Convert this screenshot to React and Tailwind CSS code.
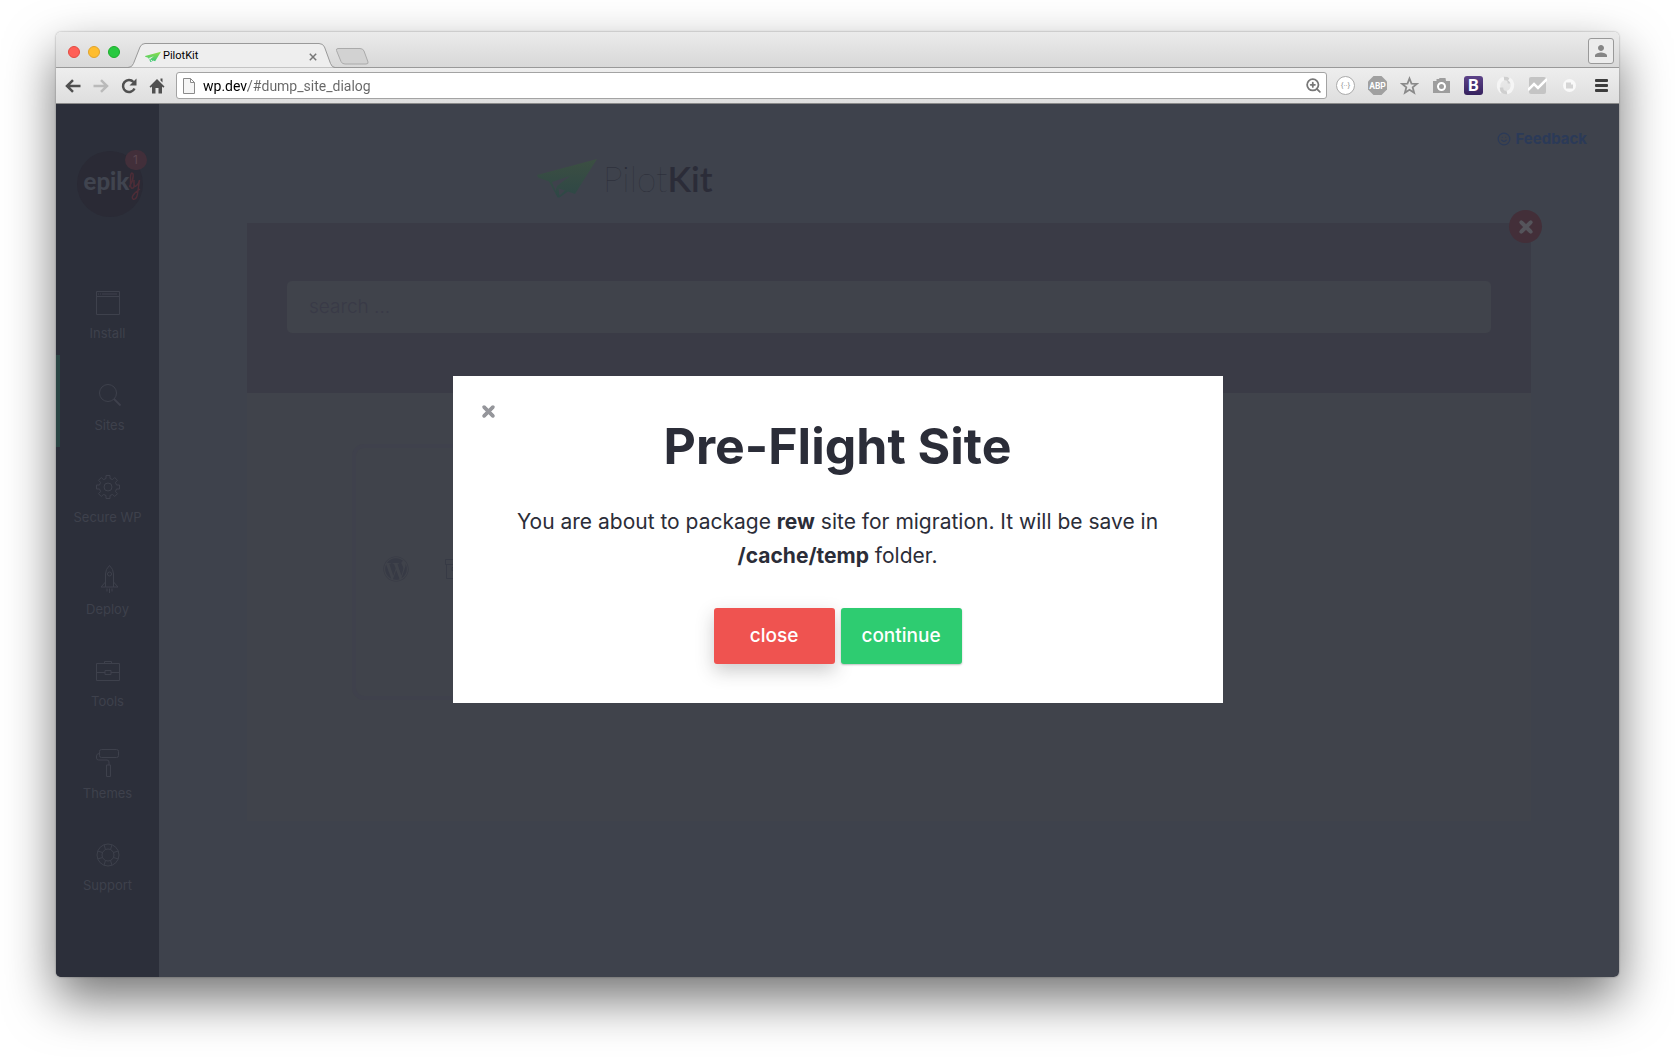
import React from "react";
import { Smile, ZoomIn } from "lucide-react";
import { FaWordpress } from "react-icons/fa";
import { MdPerson } from "react-icons/md";

function Plane({ className, id, top, bottom }) {
  return (
    <svg className={className} viewBox="0 0 60 39" aria-hidden="true">
      <defs>
        <linearGradient id={id} x1="0" y1="0" x2="0" y2="1">
          <stop offset="0" stopColor={top} />
          <stop offset="1" stopColor={bottom} />
        </linearGradient>
      </defs>
      <path
        fillRule="evenodd"
        fill={`url(#${id})`}
        d="M60 0L0 16l1 2.500 11 4L20.500 38.500h2l8.500-6 7 2.500zM33 17L20 27l-1.500 5L15 23zM21.500 29.500l6.500 2-5.500 5z"
      />
    </svg>
  );
}

const Cross = ({ size }) => (
  <svg width={size} height={size} viewBox="0 0 12 12" fill="none" stroke="currentColor" strokeWidth="3.200" strokeLinecap="round" aria-hidden="true">
    <path d="M1.800 1.800l8.400 8.400M10.200 1.800l-8.400 8.400" strokeLinecap="butt" />
    <path d="M1.900 1.900l8.200 8.200M10.100 1.900l-8.200 8.200" />
  </svg>
);

const line = { fill: "none", stroke: "currentColor", strokeWidth: 1 };

const WindowIcon = () => (
  <svg width="24" height="24" viewBox="0 0 24 24" {...line}>
    <path d="M.5 .5h23v23H.5zM.5 5.500h23M6 3h15M2 3h1M4 3h1" />
  </svg>
);
const SearchIcon = () => (
  <svg width="24" height="24" viewBox="0 0 24 24" {...line}>
    <circle cx="10" cy="10" r="8.500" />
    <path d="M16 16l6.500 6.500" strokeWidth="1.800" />
  </svg>
);
const GearIcon = () => (
  <svg width="24" height="24" viewBox="0 0 24 24" {...line}>
    <circle cx="12" cy="12" r="4" />
    <path d="M10 .5h4v3l2.600 1.100 2.100-2.100 2.800 2.800-2.100 2.100L20.500 10h3v4h-3l-1.100 2.600 2.100 2.100-2.800 2.800-2.100-2.100L14 20.500v3h-4v-3l-2.600-1.100-2.100 2.100-2.800-2.800 2.100-2.100L3.500 14h-3v-4h3l1.100-2.600-2.100-2.100 2.800-2.800 2.100 2.100L10 3.500z" />
  </svg>
);
const RocketIcon = () => (
  <svg width="24" height="28" viewBox="2 0 24 28" {...line}>
    <path d="M11.500 22V9q0-5 4-8.500 4 3.500 4 8.500v13zM11.500 17L7 22h4.500M19.500 17l4.500 5h-4.500M13 23.500v3M15.500 23.500v4.500M18 23.500v3" />
    <circle cx="15.500" cy="9" r="2" />
  </svg>
);
const CaseIcon = () => (
  <svg width="24" height="24" viewBox="0 0 24 24" {...line}>
    <path d="M.5 4.500h23v17H.5zM8.500 4.500v-2h7v2M.5 13.500H9M15 13.500h8.500M9 11.500h6v4H9z" />
  </svg>
);
const RollerIcon = () => (
  <svg width="24" height="28" viewBox="0 0 24 28" {...line}>
    <rect x="3.500" y=".5" width="19" height="8" rx="2" />
    <path d="M3.500 4.500Q.5 4.500 .5 7v2q0 2 2 2h8.500q2 0 2 2v3M10.500 16h4v11.500h-4z" />
  </svg>
);
const BuoyIcon = () => (
  <svg width="24" height="24" viewBox="0 0 24 24" {...line}>
    <circle cx="12" cy="12" r="11" />
    <circle cx="12" cy="12" r="6" />
    <path d="M9.500 6.500L8 1.700M14.500 6.500L16 1.700M9.500 17.500L8 22.300M14.500 17.500l1.500 4.800M6.500 9.500L1.700 8M6.500 14.500L1.700 16M17.500 9.500l4.800-1.500M17.500 14.500l4.800 1.500" />
  </svg>
);

const nav = [
  ["Install", WindowIcon],
  ["Sites", SearchIcon],
  ["Secure WP", GearIcon],
  ["Deploy", RocketIcon],
  ["Tools", CaseIcon],
  ["Themes", RollerIcon],
  ["Support", BuoyIcon],
];

function TabStrip() {
  return (
    <div className="flex h-9 items-end border-b border-[#999] bg-linear-to-b from-[#ebebeb] to-[#d8d8d8]">
      <div className="flex h-full w-18 items-center gap-2 pt-1 pl-3">
        <button aria-label="Close window" className="size-3 rounded-full border border-[#e24b41] bg-[#ff5f57]" />
        <button aria-label="Minimise window" className="size-3 rounded-full border border-[#e1a32c] bg-[#ffbd2e]" />
        <button aria-label="Zoom window" className="size-3 rounded-full border border-[#1dad2b] bg-[#28c940]" />
      </div>
      <div className="relative -mb-px h-[25px] w-[207px]">
        <svg className="absolute inset-0" width="207" height="25" viewBox="0 0 207 25" aria-hidden="true">
          <path d="M0 24.500q4 0 5.500-4L12 4q1.500-3.500 5-3.500h174q4 0 5.500 3.500l6 16.500q1.500 4 4.500 4" fill="#eeeeee" stroke="#999" />
        </svg>
        <div className="relative flex h-full items-center pt-0.5 pr-[18px] pl-[17px]">
          <Plane className="h-3 w-4" id="fav" top="#8fdc4a" bottom="#35c877" />
          <span className="flex-1 pl-0.5 text-[11px] text-black">PilotKit</span>
          <button aria-label="Close tab" className="text-[#777]">
            <svg width="8" height="8" viewBox="0 0 8 8" stroke="currentColor" strokeWidth="1.500">
              <path d="M.8 .8l6.400 6.400M7.200 .8L.8 7.200" />
            </svg>
          </button>
        </div>
      </div>
      <button aria-label="New tab" className="mb-0.5">
        <svg width="34" height="17" viewBox="0 0 34 17">
          <path d="M3 .5h22q3 0 4 2.500l4 11q.5 2-2 2H10q-3 0-4-2.500L1.500 2.500q-.5-2 1.500-2z" fill="#d2d2d2" stroke="#aaa" />
        </svg>
      </button>
      <button aria-label="Profile" className="mr-[5px] mb-[3px] ml-auto flex size-[26px] items-center justify-center rounded-[3px] border border-[#999] bg-[#ececec] text-[#868686]">
        <MdPerson size={18} />
      </button>
    </div>
  );
}

function Toolbar() {
  return (
    <div className="flex h-9 items-center border-b border-[#8a8a8a] bg-linear-to-b from-[#eeeeee] to-[#dedede] pr-2 pl-[9px]">
      <div className="flex w-[111px] items-center gap-3 text-[#505050]">
        <button aria-label="Back">
          <svg width="16" height="14" viewBox="0 0 16 14" fill="none" stroke="currentColor" strokeWidth="2.500">
            <path d="M15.500 7H2M8 1.200L2 7l6 5.800" />
          </svg>
        </button>
        <button aria-label="Forward" className="text-[#bababa]">
          <svg width="16" height="14" viewBox="0 0 16 14" fill="none" stroke="currentColor" strokeWidth="2.500">
            <path d="M.5 7H14M8 1.200L14 7l-6 5.800" />
          </svg>
        </button>
        <button aria-label="Reload">
          <svg width="16" height="16" viewBox="0 0 16 16">
            <path d="M13.500 10.500A6 6 0 1 1 12.500 4" fill="none" stroke="currentColor" strokeWidth="2.500" />
            <path d="M15.500 .5v7h-7z" fill="currentColor" />
          </svg>
        </button>
        <button aria-label="Home">
          <svg width="16" height="16" viewBox="0 0 16 16" fill="currentColor">
            <path d="M8 1l7.500 7.500-1.200 1.200L13 8.500V15.500H9.500V10h-3v5.500H3V8.500L1.700 9.700.5 8.500zM11.500 .5h2v4l-2-2z" />
          </svg>
        </button>
      </div>
      <div className="flex h-[27px] flex-1 items-center rounded-[3px] border border-[#a3a3a3] bg-white pr-1 pl-1.5">
        <svg width="12" height="16" viewBox="0 0 12 16" fill="#f5f5f5" stroke="#8a8a8a">
          <path d="M.5 .5h7l4 4v11H.5zM7.500 .5v4h4" />
        </svg>
        <input
          aria-label="Address"
          defaultValue="wp.dev/#dump_site_dialog"
          className="ml-2 h-6 flex-1 bg-linear-to-r from-black from-[45px] to-[#666] to-[45px] bg-clip-text text-[14px] text-transparent outline-none"
        />
        <ZoomIn size={17} strokeWidth={2.500} className="text-[#777]" />
      </div>
      <div className="ml-[9px] flex items-center gap-[13px]">
        <button aria-label="JSON viewer" className="flex size-[19px] items-center justify-center rounded-full border border-[#aaa] bg-white text-[8px] text-[#999]">{"{··}"}</button>
        <button aria-label="Adblock Plus">
          <svg width="19" height="19" viewBox="0 0 19 19">
            <path d="M5.500 0h8L19 5.500v8L13.500 19h-8L0 13.500v-8z" fill="#a0a0a0" />
            <text x="9.500" y="12.500" textAnchor="middle" fontSize="8.500" fontWeight="700" fill="#fff">ABP</text>
          </svg>
        </button>
        <button aria-label="Bookmark">
          <svg width="19" height="19" viewBox="0 0 19 19" fill="none" stroke="#8a8a8a" strokeWidth="1.800">
            <path d="M9.500 2.500l2 5.100 5.400.3-4.200 3.500 1.400 5.300-4.600-3-4.600 3 1.400-5.300L2.100 7.900l5.400-.3z" />
          </svg>
        </button>
        <button aria-label="Camera">
          <svg width="19" height="19" viewBox="0 0 19 19">
            <path d="M1 5h3.500V3h2.500l.5-1h6l.5 3H18v12H1z" fill="#9d9d9d" />
            <circle cx="9.500" cy="10.500" r="3.500" fill="none" stroke="#fff" strokeWidth="2" />
          </svg>
        </button>
        <button aria-label="Bootstrap" className="flex size-[19px] items-center justify-center rounded-[3px] bg-linear-to-b from-[#5d4389] to-[#36225e] text-[17px] leading-none font-bold text-white">B</button>
        <button aria-label="Refresh extension">
          <svg width="19" height="19" viewBox="0 0 19 19" fill="none" strokeWidth="3.500">
            <path d="M6 16A7.500 7.500 0 0 1 8 2.500" stroke="#f5f5f5" />
            <path d="M8 2.500q5.500-.5 5.500 5M11 16.500q-5.500 .5-5.500-5" stroke="#cfcfcf" />
            <path d="M13 3A7.500 7.500 0 0 1 11 16.500" stroke="#f5f5f5" />
          </svg>
        </button>
        <button aria-label="Analytics">
          <svg width="19" height="19" viewBox="0 0 19 19">
            <rect x="1" y="1" width="17" height="17" rx="2" fill="#c4c4c4" />
            <path d="M0 14l6-6 4 4 9-9" fill="none" stroke="#fff" strokeWidth="2.500" />
          </svg>
        </button>
        <button aria-label="Notes">
          <svg width="19" height="19" viewBox="0 0 19 19">
            <circle cx="9.500" cy="9.500" r="6.500" fill="#f9f9f9" />
            <path d="M6 6.500h5v2h2v4H6z" fill="#d5d5d5" />
          </svg>
        </button>
        <button aria-label="Menu" className="flex w-[19px] flex-col items-center gap-[2px]">
          <i className="h-[3px] w-[13px] rounded-[1px] bg-[#3d3d3d]" />
          <i className="h-[3px] w-[13px] rounded-[1px] bg-[#3d3d3d]" />
          <i className="h-[3px] w-[13px] rounded-[1px] bg-[#3d3d3d]" />
        </button>
      </div>
    </div>
  );
}

function Sidebar() {
  return (
    <aside className="flex w-[103px] shrink-0 flex-col items-center bg-[#2c2f3a] pt-[47px] text-[#3e414c]">
      <div className="relative ml-1 flex size-[66px] items-start justify-center rounded-full bg-[#2a2a35]">
        <div className="flex items-start pt-4 pl-1.5">
          <span className="font-['Lato'] text-[24px] leading-7 font-black text-[#40444f]">epik</span>
          <svg width="12" height="30" viewBox="0 0 12 30" className="mt-1" fill="none" stroke="#4d2d37" strokeWidth="1.500">
            <path d="M0 16Q5 9 4 3 2 0 1.500 6l0 9q1 4 3.500 1V9q-.5 7 2 6 3-2 3.500-6L8.500 23q-1 6-4.500 5-3-3 7-10" />
          </svg>
        </div>
        <span className="absolute -top-px -right-1 flex h-5 w-[22px] items-center justify-center rounded-full bg-[#422f3a] text-[12px] text-[#5a4650]">1</span>
      </div>
      <nav className="mt-[46px] w-full">
        {nav.map(([label, Icon]) => (
          <a
            key={label}
            href="#"
            className={
              label === "Sites"
                ? "flex h-[92px] flex-col items-center justify-end border-l-4 border-[#2b4544] pb-3"
                : "flex h-[92px] flex-col items-center justify-end pb-3"
            }
          >
            <span className="flex h-7 items-center"><Icon /></span>
            <span className="mt-1.5 text-[13px] leading-5">{label}</span>
          </a>
        ))}
      </nav>
    </aside>
  );
}

function Page() {
  return (
    <div className="relative flex-1 px-[88px]">
      <a href="#" className="absolute top-[26px] right-8 flex items-center gap-1 text-[15px] leading-[18px] font-bold text-[#2b3a58]">
        <Smile size={14} strokeWidth={2} />
        Feedback
      </a>
      <div className="flex h-[119px] items-center pt-[29px] pl-[290px]">
        <Plane className="h-[39px] w-[60px]" id="logo" top="#3c4f42" bottom="#2e4746" />
        <span className="pl-1.5 font-['Lato'] text-[35px] leading-none font-thin text-[#282a35]">
          Pilot<span className="font-semibold text-[#2b2c38]">Kit</span>
        </span>
      </div>
      <main className="relative bg-[#40434b]">
        <button aria-label="Close panel" className="absolute -top-[13px] -right-[11px] flex size-[33px] items-center justify-center rounded-full bg-[#432f39] text-[#55545b]">
          <Cross size={14} />
        </button>
        <div className="bg-[#3a3b46] px-10 pt-[58px] pb-[60px]">
          <input aria-label="Search" placeholder="search ..." className="block h-[52px] w-full rounded-[5px] bg-[#40434b] px-[22px] pb-0.5 text-[19px] font-light placeholder-[#393a47]" />
        </div>
        <div className="px-[105px] pt-[51px] pb-[121px]">
          <div className="flex h-[256px] w-[480px] items-center gap-9 rounded-xl border-4 border-[#3f414c] px-[27px] pb-1.5 text-[#373a45]">
            <FaWordpress size={26} />
            <svg width="24" height="22" viewBox="0 0 24 22" {...line}>
              <path d="M.5 1.500h23v5H.5zM1.500 6.500v14h21v-14M7 9.500h10v3H7z" />
            </svg>
          </div>
        </div>
      </main>
    </div>
  );
}

function Dialog() {
  return (
    <div role="dialog" aria-labelledby="title" className="relative w-[770px] bg-white px-14 pt-10 pb-[39px] text-center text-[#2b2d38]">
      <button aria-label="Close dialog" className="absolute top-[29px] left-[29px] text-[#95969b]">
        <Cross size={13} />
      </button>
      <h1 id="title" className="text-[50px] leading-[60px] font-bold">Pre-Flight Site</h1>
      <p className="mt-[29px] text-[21px] leading-[34px]">
        You are about to package <b>rew</b> site for migration. It will be save in <b>/cache/temp</b> folder.
      </p>
      <div className="mt-[35px] flex justify-center gap-1.5 text-[19px] font-medium text-white">
        <button className="h-14 w-[121px] rounded-[3px] bg-[#ef5350] shadow-[0_7px_18px_rgba(50,50,50,0.25)]">close</button>
        <button className="h-14 w-[121px] rounded-[3px] bg-[#2ecc71] shadow-[0_1px_2px_rgba(0,0,0,0.25)]">continue</button>
      </div>
    </div>
  );
}

export default function App() {
  return (
    <div className="flex min-h-screen flex-col bg-white px-14 pt-8 pb-20 font-['Inter',sans-serif]">
      <div className="flex flex-1 flex-col overflow-hidden rounded-[5px] shadow-[0_22px_50px_rgba(0,0,0,0.55),0_0_2px_rgba(0,0,0,0.4)]">
        <div className="font-['Roboto',sans-serif]">
          <TabStrip />
          <Toolbar />
        </div>
        <div className="relative flex flex-1 bg-[#3e424c]">
          <Sidebar />
          <Page />
          <div className="absolute inset-0 flex items-center justify-center pb-0.5">
            <Dialog />
          </div>
        </div>
      </div>
    </div>
  );
}
